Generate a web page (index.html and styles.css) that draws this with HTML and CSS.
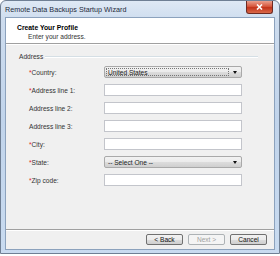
FILE: index.html
```html
<!DOCTYPE html>
<html lang="en">
  <head>
    <meta charset="UTF-8" />
    <title>Remote Data Backups Startup Wizard</title>
    <link rel="stylesheet" href="styles.css">
  </head>
  <body>
    <div class="window">
      <!-- Title bar -->
      <div class="titlebar">
        <span class="title">Remote Data Backups Startup Wizard</span>
        <div class="close">
          <svg width="7" height="6" viewBox="0 0 7 6">
            <path d="M1 0.5 L6 5.5 M6 0.5 L1 5.5" stroke="#fff" stroke-width="1.6" />
          </svg>
        </div>
      </div>

      <div class="client">
        <!-- Wizard header -->
        <div class="header">
          <div class="heading">Create Your Profile</div>
          <div class="subheading">Enter your address.</div>
        </div>

        <!-- Address form -->
        <div class="content">
          <div class="group-title">
            <span>Address</span>
            <span class="rule"></span>
          </div>

          <div class="form">
            <label class="label"><span class="req">*</span>Country:</label>
            <div class="combo focused"><span class="combo-text">United States</span><span class="arrow"></span></div>

            <label class="label"><span class="req">*</span>Address line 1:</label>
            <div class="textbox"></div>

            <label class="label">Address line 2:</label>
            <div class="textbox"></div>

            <label class="label">Address line 3:</label>
            <div class="textbox"></div>

            <label class="label"><span class="req">*</span>City:</label>
            <div class="textbox"></div>

            <label class="label"><span class="req">*</span>State:</label>
            <div class="combo"><span class="combo-text">-- Select One --</span><span class="arrow"></span></div>

            <label class="label"><span class="req">*</span>Zip code:</label>
            <div class="textbox"></div>
          </div>
        </div>

        <!-- Wizard buttons -->
        <div class="footer">
          <div class="btn">&lt; Back</div>
          <div class="btn disabled">Next &gt;</div>
          <div class="btn">Cancel</div>
        </div>
      </div>
    </div>
  </body>
</html>
```

FILE: styles.css
```css
body {
  margin: 0;
  background: #fff;
  font-family: "Liberation Sans", Arial, sans-serif;
  font-size: 6.6px;
  color: #222;
}

.window {
  width: 280px;
  height: 254px;
  box-sizing: border-box;
  display: flex;
  flex-direction: column;
  padding: 0 4px 3px 4px;
  border: 1px solid #6f7f94;
  border-radius: 6px 6px 0 0;
  background: linear-gradient(to bottom, #dfe9f5 0px, #cddcee 20px, #c1d4eb 120px, #c9dbf0 254px);
}

.titlebar {
  height: 16px;
  display: flex;
  align-items: center;
  justify-content: space-between;
}

.title {
  font-size: 7.2px;
  color: #1e2b3c;
}

.close {
  width: 25px;
  height: 12px;
  margin-top: -3px;
  margin-right: 2px;
  border: 1px solid #6d2a22;
  border-top: none;
  border-radius: 0 0 3px 3px;
  background: linear-gradient(to bottom, #eaa08e 0%, #d6573d 45%, #c2331a 55%, #d9694a 100%);
  display: flex;
  align-items: center;
  justify-content: center;
}

.client {
  flex: 1;
  display: flex;
  flex-direction: column;
  border: 1px solid #8ca2bd;
  background: #f0f0f0;
}

.header {
  height: 25px;
  background: #fff;
  border-bottom: 1px solid #a0a0a0;
  padding-left: 11px;
  display: flex;
  flex-direction: column;
  justify-content: center;
}

.heading {
  margin-top: 2px;
  font-weight: bold;
  color: #000;
  font-size: 6.8px;
}

.subheading {
  margin-top: 2px;
  padding-left: 11px;
  color: #333;
}

.content {
  flex: 1;
  border-top: 1px solid #fff;
  padding: 8px 16px 0 13px;
}

.group-title {
  display: flex;
  align-items: center;
  gap: 2px;
  color: #333;
}

.rule {
  flex: 1;
  height: 0;
  border-top: 1px solid #d5dfe5;
  border-bottom: 1px solid #fff;
}

.form {
  display: grid;
  grid-template-columns: 75px 138px;
  grid-auto-rows: 12px;
  row-gap: 6px;
  margin-top: 6px;
  padding-left: 10px;
  align-items: center;
}

.label {
  color: #333;
}

.req {
  color: #e0262a;
}

.textbox {
  height: 12px;
  box-sizing: border-box;
  background: #fff;
  border: 1px solid #c3c5cb;
}

.combo {
  height: 12px;
  box-sizing: border-box;
  border: 1px solid #a9a9a9;
  border-radius: 2px;
  background: linear-gradient(to bottom, #f2f2f2 0%, #ebebeb 50%, #dddddd 51%, #cfcfcf 100%);
  display: flex;
  align-items: center;
  padding: 1px;
}

.combo-text {
  flex: 1;
  height: 100%;
  box-sizing: border-box;
  padding-left: 1px;
  display: flex;
  align-items: center;
  color: #222;
  border: 1px dotted transparent;
}

.combo.focused .combo-text {
  border-color: #777;
}

.arrow {
  width: 0;
  height: 0;
  margin: 0 3px 0 4px;
  border-left: 2.5px solid transparent;
  border-right: 2.5px solid transparent;
  border-top: 3px solid #111;
}

.footer {
  height: 19px;
  border-top: 1px solid #a0a0a0;
  box-shadow: inset 0 1px 0 #fff;
  display: flex;
  justify-content: flex-end;
  align-items: center;
  gap: 5px;
  padding-right: 7px;
}

.btn {
  width: 37px;
  height: 11px;
  box-sizing: border-box;
  border: 1px solid #707070;
  border-radius: 2px;
  background: linear-gradient(to bottom, #f2f2f2 0%, #ebebeb 50%, #dddddd 51%, #cfcfcf 100%);
  display: flex;
  align-items: center;
  justify-content: center;
  color: #111;
}

.btn.disabled {
  border-color: #adb2b5;
  background: #f4f4f4;
  color: #a0a0a0;
}
```
